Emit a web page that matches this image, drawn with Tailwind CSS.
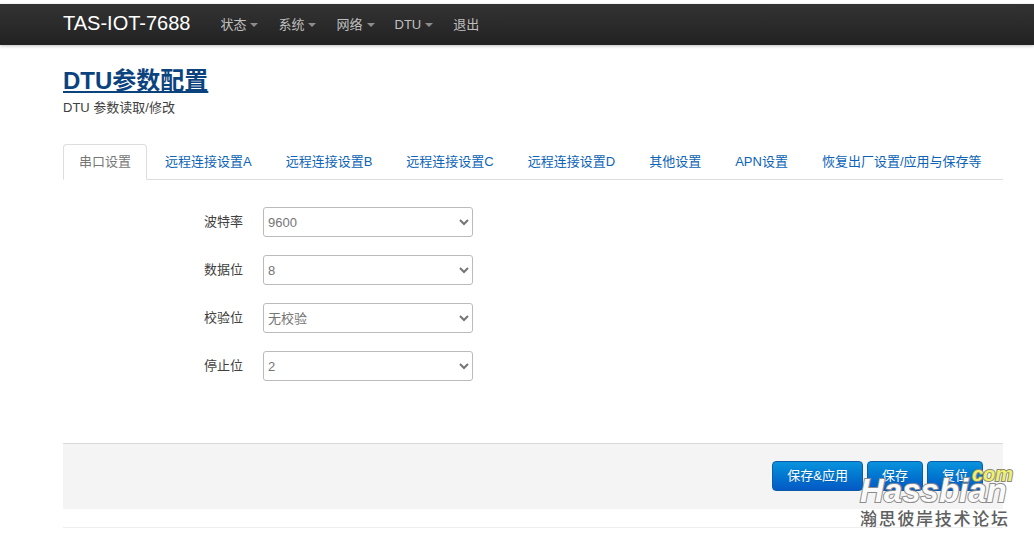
<!DOCTYPE html>
<html lang="zh-CN">
<head>
<meta charset="utf-8">
<meta name="viewport" content="width=device-width, initial-scale=1">
<title>TAS-IOT-7688 - DTU参数配置</title>
<script src="https://cdn.jsdelivr.net/npm/@tailwindcss/browser@4"></script>
</head>
<body class="bg-white font-['Liberation_Sans','Noto_Sans_CJK_SC',sans-serif] text-[13px] leading-[18px] text-[#404040]">
  <header class="mt-1 flex h-[41px] items-center bg-linear-to-b from-[#333] to-[#222] pr-8 pl-[63px] shadow-[0_1px_3px_rgba(0,0,0,0.25)]">
    <a href="#" class="mr-5 pb-1 text-[20px] leading-6 text-white">TAS-IOT-7688</a>
    <nav class="flex text-[#bfbfbf]">
      <a href="#" class="flex items-center gap-1 px-[10px]">状态<span class="border-x-4 border-t-4 border-x-transparent border-t-[#8c8c8c]"></span></a>
      <a href="#" class="flex items-center gap-1 px-[10px]">系统<span class="border-x-4 border-t-4 border-x-transparent border-t-[#8c8c8c]"></span></a>
      <a href="#" class="flex items-center gap-1 px-[10px]">网络<span class="border-x-4 border-t-4 border-x-transparent border-t-[#8c8c8c]"></span></a>
      <a href="#" class="flex items-center gap-1 px-[10px]">DTU<span class="border-x-4 border-t-4 border-x-transparent border-t-[#8c8c8c]"></span></a>
      <a href="#" class="px-[10px]">退出</a>
    </nav>
  </header>

  <main class="relative mr-[31px] ml-[63px] pt-[18px]">
    <h2 class="text-[24px] leading-9 font-bold"><a href="#" class="text-[#0b437f] underline decoration-2 underline-offset-2">DTU参数配置</a></h2>
    <p>DTU 参数读取/修改</p>

    <nav class="mt-[27px] flex gap-0.5 border-b border-[#ddd] whitespace-nowrap text-[#0c63b8]">
      <a href="#" class="-mb-px rounded-t border border-[#ddd] border-b-white bg-white px-[15px] py-2 text-[#777]">串口设置</a>
      <a href="#" class="px-4 pt-[9px] pb-2">远程连接设置A</a>
      <a href="#" class="px-4 pt-[9px] pb-2">远程连接设置B</a>
      <a href="#" class="px-4 pt-[9px] pb-2">远程连接设置C</a>
      <a href="#" class="px-4 pt-[9px] pb-2">远程连接设置D</a>
      <a href="#" class="px-4 pt-[9px] pb-2">其他设置</a>
      <a href="#" class="px-4 pt-[9px] pb-2">APN设置</a>
      <a href="#" class="px-4 pt-[9px] pb-2">恢复出厂设置/应用与保存等</a>
    </nav>

    <form>
      <div class="flex flex-col gap-[18px] pt-[27px] pb-[62px]">
        <div class="flex items-start gap-5">
          <label for="baud" class="w-[180px] pt-1.5 text-right">波特率</label>
          <select id="baud" class="h-[30px] w-[210px] rounded-[3px] border border-[#bbb] bg-white text-[#757575]"><option>9600</option><option>115200</option></select>
        </div>
        <div class="flex items-start gap-5">
          <label for="databits" class="w-[180px] pt-1.5 text-right">数据位</label>
          <select id="databits" class="h-[30px] w-[210px] rounded-[3px] border border-[#bbb] bg-white text-[#757575]"><option>8</option><option>7</option></select>
        </div>
        <div class="flex items-start gap-5">
          <label for="parity" class="w-[180px] pt-1.5 text-right">校验位</label>
          <select id="parity" class="h-[30px] w-[210px] rounded-[3px] border border-[#bbb] bg-white text-[#757575]"><option>无校验</option><option>奇校验</option></select>
        </div>
        <div class="flex items-start gap-5">
          <label for="stopbits" class="w-[180px] pt-1.5 text-right">停止位</label>
          <select id="stopbits" class="h-[30px] w-[210px] rounded-[3px] border border-[#bbb] bg-white text-[#757575]"><option>2</option><option>1</option></select>
        </div>
      </div>

      <div class="flex justify-end gap-1 border-t border-[#d8d8d8] bg-[#f4f4f4] px-5 pt-[17px] pb-[18px] text-white">
        <button type="button" class="h-[30px] rounded border border-[#0a5ba8] bg-linear-to-b from-[#0a93dc] to-[#0758c4] px-[14px] text-shadow-2xs">保存&amp;应用</button>
        <button type="button" class="h-[30px] rounded border border-[#0a5ba8] bg-linear-to-b from-[#0a93dc] to-[#0758c4] px-[14px] text-shadow-2xs">保存</button>
        <button type="reset" class="h-[30px] rounded border border-[#0a5ba8] bg-linear-to-b from-[#0a93dc] to-[#0758c4] px-[14px] text-shadow-2xs">复位</button>
      </div>
    </form>
    <hr class="mt-[18px] border-[#eee]">

    <!-- Forum watermark over the lower right corner -->
    <div class="pointer-events-none absolute -right-[10px] -bottom-0.5 w-[153px] whitespace-nowrap">
      <div class="text-right text-[20px] leading-5 font-bold text-[#f0f070] italic [-webkit-text-stroke:2px_#8a8a70] [paint-order:stroke_fill]">com</div>
      <div class="-mt-2 mb-1 text-[33px] leading-[30px] font-bold text-[#fafafa] italic [-webkit-text-stroke:2px_#8c8c8c] [paint-order:stroke_fill]">Hassbian</div>
      <div class="text-[17px] leading-5 font-medium tracking-widest text-[#606060]">瀚思彼岸技术论坛</div>
    </div>
  </main>
</body>
</html>
